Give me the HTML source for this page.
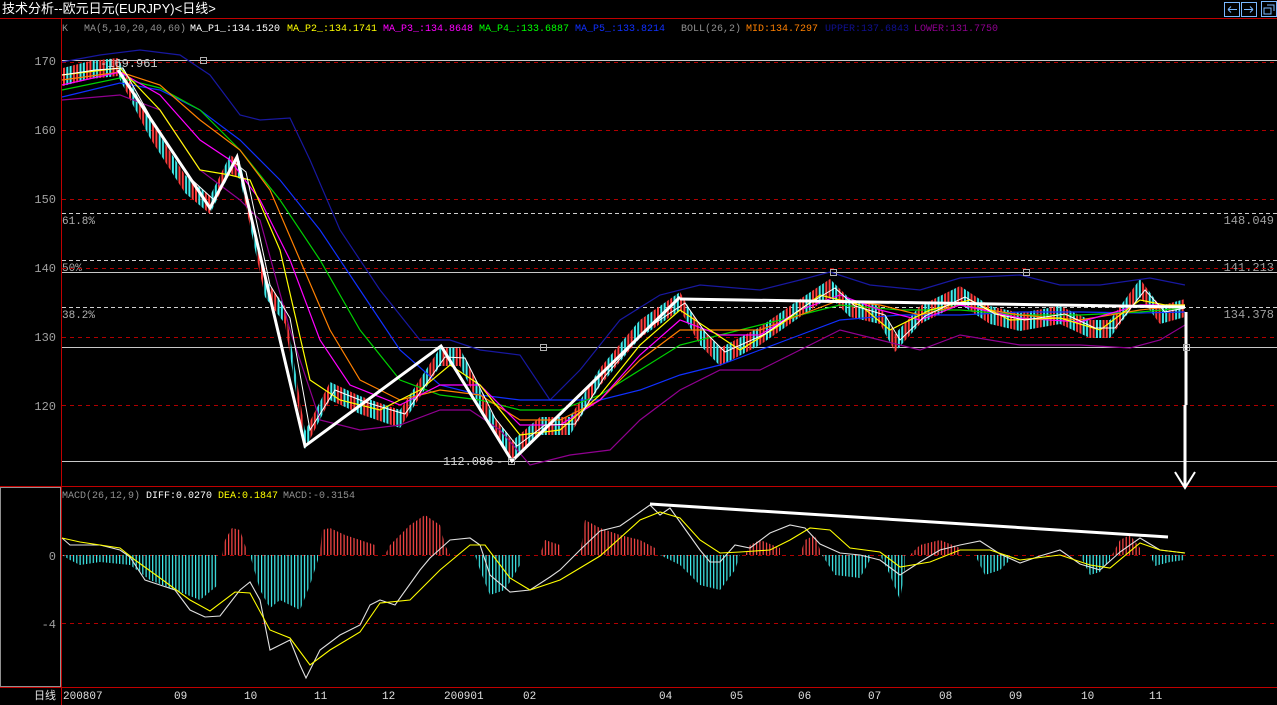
<!DOCTYPE html>
<html><head><meta charset="utf-8"><style>
html,body{margin:0;padding:0;background:#000;width:1277px;height:705px;overflow:hidden}
svg{display:block}
text{font-family:"Liberation Mono","Noto Sans CJK SC",monospace;}
</style></head><body>
<svg width="1277" height="705" xmlns="http://www.w3.org/2000/svg">
<defs>
<pattern id="cd" patternUnits="userSpaceOnUse" x="63" y="0" width="13.2" height="6">
<rect x="0" y="0" width="2" height="6" fill="#ff3c3c"/><rect x="3.3" y="0" width="2" height="6" fill="#40f0f0"/>
<rect x="6.6" y="0" width="2" height="6" fill="#40f0f0"/><rect x="9.9" y="0" width="2" height="6" fill="#ff3c3c"/>
</pattern>
<pattern id="hr" patternUnits="userSpaceOnUse" x="63" y="0" width="3.3" height="4"><rect width="1.2" height="4" fill="#ff4848"/></pattern>
<pattern id="hc" patternUnits="userSpaceOnUse" x="63" y="0" width="3.3" height="4"><rect width="1.2" height="4" fill="#40f0f0"/></pattern>
</defs>
<rect width="1277" height="705" fill="#000"/>
<text x="2" y="13" fill="#fff" font-size="13" style='font-family:"Liberation Sans","Noto Sans CJK SC",sans-serif'>技术分析--欧元日元(EURJPY)&lt;日线&gt;</text>
<g fill="none" stroke="#7ab8ff" stroke-width="1">
<rect x="1224.5" y="2.5" width="15" height="14"/><rect x="1241.5" y="2.5" width="15" height="14"/><rect x="1261.5" y="1.5" width="15" height="15"/>
<path d="M1228 9.5h9M1228 9.5l3-3M1228 9.5l3 3M1253 9.5h-9M1253 9.5l-3-3M1253 9.5l-3 3M1264 8h7v6h-7zM1267 5h7v6"/>
</g>
<line x1="0" y1="18.5" x2="1277" y2="18.5" stroke="#c00000"/>
<line x1="61.5" y1="18" x2="61.5" y2="705" stroke="#c00000"/>
<line x1="0" y1="486.5" x2="1277" y2="486.5" stroke="#c00000"/>
<line x1="0" y1="687.5" x2="1277" y2="687.5" stroke="#c00000"/>
<rect x="0.5" y="487.5" width="60" height="199" fill="none" stroke="#909090"/>
<g font-size="10">
<text x="62" y="31" fill="#909090">K</text>
<text x="84" y="31" fill="#909090">MA(5,10,20,40,60)</text>
<text x="190" y="31" fill="#fff">MA_P1_:134.1520</text>
<text x="287" y="31" fill="#ffff00">MA_P2_:134.1741</text>
<text x="383" y="31" fill="#ff00ff">MA_P3_:134.8648</text>
<text x="479" y="31" fill="#00ff00">MA_P4_:133.6887</text>
<text x="575" y="31" fill="#1030ff">MA_P5_:133.8214</text>
<text x="681" y="31" fill="#909090">BOLL(26,2)</text>
<text x="746" y="31" fill="#ff8000">MID:134.7297</text>
<text x="825" y="31" fill="#101090">UPPER:137.6843</text>
<text x="914" y="31" fill="#900090">LOWER:131.7750</text>
<text x="62" y="498" fill="#909090">MACD(26,12,9)</text>
<text x="146" y="498" fill="#fff">DIFF:0.0270</text>
<text x="218" y="498" fill="#ffff00">DEA:0.1847</text>
<text x="283" y="498" fill="#909090">MACD:-0.3154</text>
</g>
<g font-size="12" fill="#a0a0a0" text-anchor="end">
<text x="56" y="65">170</text><text x="56" y="134">160</text><text x="56" y="203">150</text>
<text x="56" y="272">140</text><text x="56" y="341">130</text><text x="56" y="410">120</text>
<text x="56" y="560">0</text><text x="56" y="628">-4</text>
<text x="1274" y="224">148.049</text><text x="1274" y="271">141.213</text><text x="1274" y="318">134.378</text>
</g>
<g font-size="11" fill="#b0b0b0">
<text x="62" y="224">61.8%</text><text x="62" y="271">50%</text><text x="62" y="318">38.2%</text>
</g>
<g stroke-width="1" fill="none">
<line x1="62" y1="60.5" x2="1277" y2="60.5" stroke="#c8c8c8"/>
<line x1="62" y1="272.5" x2="1277" y2="272.5" stroke="#c8c8c8"/>
<line x1="62" y1="347.5" x2="1277" y2="347.5" stroke="#c8c8c8"/>
<line x1="62" y1="461.5" x2="1277" y2="461.5" stroke="#c8c8c8"/>
<g stroke="#b00000" stroke-dasharray="4 4">
<line x1="62" y1="62.5" x2="1277" y2="62.5"/><line x1="62" y1="130.5" x2="1277" y2="130.5"/>
<line x1="62" y1="199.5" x2="1277" y2="199.5"/><line x1="62" y1="268.5" x2="1277" y2="268.5"/>
<line x1="62" y1="337.5" x2="1277" y2="337.5"/><line x1="62" y1="405.5" x2="1277" y2="405.5"/>
<line x1="62" y1="555.5" x2="1277" y2="555.5"/><line x1="62" y1="623.5" x2="1277" y2="623.5"/>
</g>
<g stroke="#d0d0d0" stroke-dasharray="4 3">
<line x1="62" y1="213.5" x2="1277" y2="213.5"/><line x1="62" y1="260.5" x2="1277" y2="260.5"/><line x1="62" y1="307.5" x2="1277" y2="307.5"/>
</g>
</g>
<!-- candles -->
<polygon fill="url(#cd)" points="63,68 90,61 118,58 150,120 185,175 210,196 230,155 240,161 265,279 285,306 305,431 330,382 360,396 400,410 440,348 460,348 490,410 512,441 540,417 570,417 600,368 640,320 680,292 700,327 720,348 760,327 800,299 830,279 850,299 880,306 895,334 920,306 960,286 990,306 1020,313 1060,306 1090,320 1110,320 1140,279 1160,306 1185,299 1185,317 1160,324 1140,297 1110,338 1090,338 1060,324 1020,331 990,324 960,304 920,324 895,352 880,324 850,317 830,297 800,317 760,345 720,366 700,345 680,310 640,338 600,386 570,435 540,435 512,459 490,428 460,366 440,366 400,428 360,414 330,400 305,449 285,324 265,297 240,179 230,173 210,214 185,193 150,138 118,76 90,79 63,86"/>
<g fill="none" stroke-width="1.2">
<polyline stroke="#1818a0" points="62,62 100,55 140,50 180,55 210,75 240,115 260,120 290,118 310,160 340,230 380,290 420,340 450,340 480,350 520,355 550,400 580,370 620,320 660,295 700,285 760,290 800,280 830,272 870,285 920,290 960,278 1020,275 1060,285 1100,285 1150,278 1185,285"/>
<polyline stroke="#900090" points="62,100 120,95 160,110 200,170 240,200 260,220 290,330 320,420 360,430 400,425 440,410 470,410 500,430 530,465 570,455 610,450 640,420 680,390 720,370 760,370 800,350 840,330 880,340 920,350 960,335 1020,345 1080,345 1130,348 1160,340 1185,325"/>
<polyline stroke="#1030ff" points="62,97 120,83 160,90 200,110 240,140 280,180 320,230 360,290 400,350 440,385 480,395 520,400 560,400 600,400 640,390 680,375 720,365 760,350 800,335 840,320 900,315 960,315 1020,312 1080,312 1140,313 1185,312"/>
<polyline stroke="#00d000" points="62,90 120,78 160,88 200,110 240,150 280,200 320,260 360,330 400,380 440,395 480,400 520,410 560,410 600,395 640,370 680,345 720,335 760,325 800,315 840,305 900,310 960,310 1020,315 1080,315 1140,312 1185,308"/>
<polyline stroke="#ff8000" points="62,80 120,72 160,85 200,120 240,150 270,190 300,260 330,330 360,380 400,400 440,390 480,395 520,420 560,420 600,400 640,360 680,330 720,330 760,330 800,315 840,300 880,305 920,315 960,305 1020,315 1080,320 1140,310 1185,305"/>
<polyline stroke="#ff00ff" points="62,85 120,72 160,95 200,140 230,160 260,200 290,260 320,340 350,385 400,405 440,385 480,385 520,425 560,425 600,400 640,355 680,320 720,335 760,335 800,310 840,295 880,310 920,320 960,305 1020,318 1080,322 1140,305 1185,305"/>
<polyline stroke="#ffff00" points="62,75 120,68 160,110 200,170 230,175 250,180 280,250 310,380 340,400 380,410 420,390 450,365 480,385 520,435 560,430 600,395 640,345 680,310 710,330 740,350 780,325 820,295 860,305 890,330 930,310 970,300 1010,320 1060,318 1100,330 1140,300 1165,305 1185,305"/>
<polyline stroke="#ffffff" stroke-width="1" points="62,75 95,70 123,68 155,125 190,178 214,200 234,162 246,172 270,285 290,318 310,430 335,390 365,402 405,414 445,357 465,358 495,418 517,446 545,425 575,424 605,376 645,330 685,303 705,332 725,352 765,334 805,306 835,288 855,306 885,315 900,340 925,316 965,297 995,314 1025,320 1065,314 1095,328 1115,328 1145,290 1165,312 1185,308"/>
</g>
<!-- MACD histogram -->
<g>
<polygon fill="url(#hc)" points="62,555 70,560 80,565 100,562 130,565 150,580 175,590 200,600 218,585 218,555"/>
<polygon fill="url(#hr)" points="222,555 225,540 232,528 240,530 246,548 246,555"/>
<polygon fill="url(#hc)" points="250,555 260,590 270,608 280,600 300,610 310,585 318,560 318,555"/>
<polygon fill="url(#hr)" points="320,555 322,530 330,528 345,535 360,540 375,545 375,555"/>
<polygon fill="url(#hr)" points="385,555 390,545 400,535 410,525 425,515 440,525 445,545 450,555"/>
<polygon fill="url(#hc)" points="475,555 480,570 490,595 505,590 520,565 520,555"/>
<polygon fill="url(#hr)" points="540,555 545,540 560,545 560,555"/>
<polygon fill="url(#hr)" points="580,555 585,520 600,528 620,535 640,540 655,548 655,555"/>
<polygon fill="url(#hc)" points="660,555 680,565 700,585 720,590 735,570 740,555"/>
<polygon fill="url(#hr)" points="745,555 750,545 760,540 780,548 780,555"/>
<polygon fill="url(#hr)" points="800,555 805,540 815,535 820,550 820,555"/>
<polygon fill="url(#hc)" points="822,555 835,575 860,578 870,560 870,555"/>
<polygon fill="url(#hc)" points="880,555 890,575 900,600 905,570 905,555"/>
<polygon fill="url(#hr)" points="910,555 920,545 940,540 960,548 960,555"/>
<polygon fill="url(#hc)" points="975,555 985,575 1000,570 1010,560 1010,555"/>
<polygon fill="url(#hc)" points="1080,555 1090,575 1100,572 1110,560 1110,555"/>
<polygon fill="url(#hr)" points="1112,555 1120,540 1130,535 1140,548 1140,555"/>
<polygon fill="url(#hc)" points="1150,555 1155,566 1170,562 1185,560 1185,555"/>
</g>
<g fill="none" stroke-width="1.1">
<polyline stroke="#e0e0e0" points="62,538 70,545 100,545 120,550 130,557 145,580 160,585 175,590 190,610 205,617 220,616 240,590 250,582 260,600 270,650 280,645 290,640 300,665 306,678 320,650 340,635 350,630 360,625 370,605 380,600 395,605 420,570 430,558 450,540 470,538 480,545 490,575 510,592 530,590 550,577 560,570 570,560 580,550 600,531 620,526 640,512 650,505 660,515 670,508 680,522 700,550 710,562 720,562 735,545 750,548 770,533 790,525 805,528 820,544 840,553 860,555 880,560 900,575 920,562 940,550 960,545 980,541 1000,554 1020,563 1040,556 1060,550 1080,564 1100,570 1120,552 1140,538 1160,550 1185,553"/>
<polyline stroke="#ffff00" points="62,538 80,542 120,548 135,560 160,578 190,600 210,611 235,592 250,593 270,630 290,638 310,665 330,650 360,632 380,603 410,600 440,570 470,545 485,545 510,578 530,590 560,580 600,556 640,520 660,512 680,518 700,540 720,553 740,552 770,550 790,540 810,528 830,530 850,548 880,552 900,567 930,562 960,550 990,550 1020,560 1060,555 1090,565 1110,568 1140,543 1160,550 1185,553"/>
</g>
<g stroke="#fff" stroke-width="3" fill="none" stroke-linejoin="miter">
<polyline points="118,70 210,208 237,157 305,446 441,346 512,461 680,297"/>
<line x1="680" y1="299" x2="1185" y2="307"/>
<line x1="650" y1="504" x2="1168" y2="537"/>
<line x1="1186" y1="312" x2="1186" y2="405"/>
<line x1="1185" y1="405" x2="1185" y2="486"/>
<path d="M1175 472 L1185 488 L1195 472" stroke-width="2"/>
</g>
<g fill="none" stroke="#b0b0b0">
<rect x="200.5" y="57.5" width="6" height="6"/><rect x="540.5" y="344.5" width="6" height="6"/>
<rect x="830.5" y="269.5" width="6" height="6"/><rect x="1023.5" y="269.5" width="6" height="6"/>
<rect x="1183.5" y="344.5" width="6" height="6"/><rect x="508.5" y="458.5" width="6" height="6"/>
</g>
<g font-size="12" fill="#d0d0d0">
<text x="100" y="67">-169.961</text><text x="443" y="465">112.086</text><text x="496" y="465">-</text>
</g>
<g font-size="11" fill="#e0e0e0">
<text x="34" y="699" style='font-family:"Liberation Sans","Noto Sans CJK SC",sans-serif'>日线</text>
<text x="63" y="699">200807</text><text x="174" y="699">09</text><text x="244" y="699">10</text><text x="314" y="699">11</text>
<text x="382" y="699">12</text><text x="444" y="699">200901</text><text x="523" y="699">02</text><text x="659" y="699">04</text>
<text x="730" y="699">05</text><text x="798" y="699">06</text><text x="868" y="699">07</text><text x="939" y="699">08</text>
<text x="1009" y="699">09</text><text x="1081" y="699">10</text><text x="1149" y="699">11</text>
</g>
</svg>
</body></html>
